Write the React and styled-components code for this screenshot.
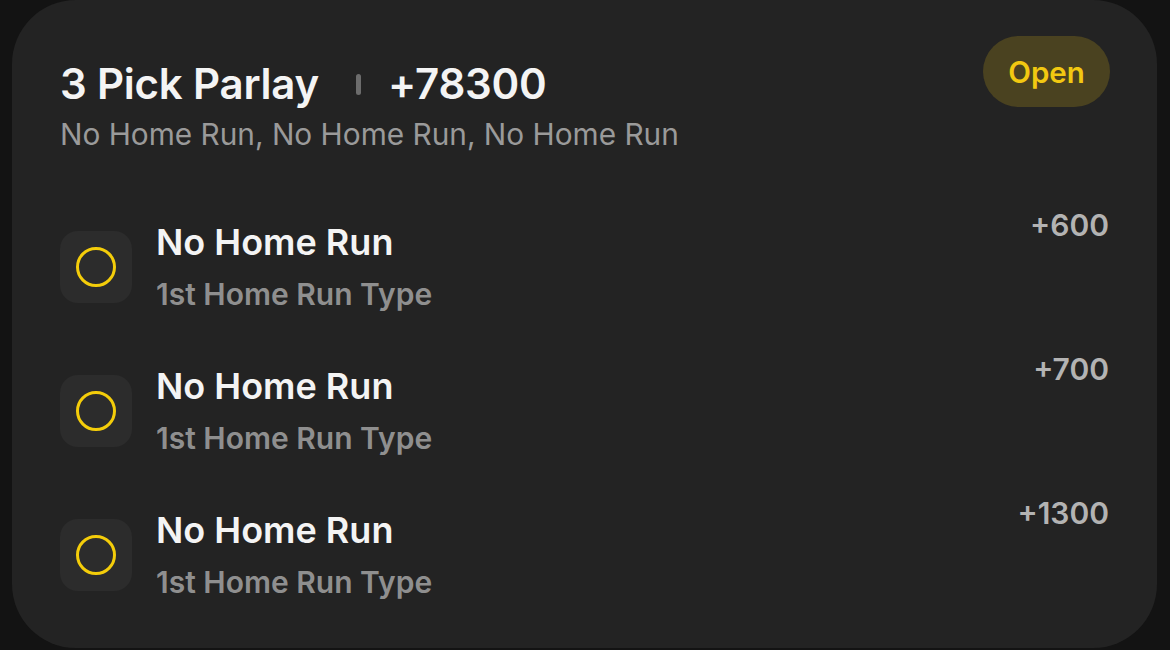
import React from "react";
import styled, { createGlobalStyle } from "styled-components";

const Global = createGlobalStyle`
  html, body { margin: 0; padding: 0; background: #131313; }
  body { font-family: Inter, "Noto Sans", "Liberation Sans", sans-serif; -webkit-font-smoothing: antialiased; }
`;

const Page = styled.div`
  width: 1170px;
  height: 650px;
  padding: 0 13px 2px 12px;
  box-sizing: border-box;
  overflow: hidden;
`;

const Card = styled.div`
  height: 648px;
  box-sizing: border-box;
  background: #232323;
  border-radius: 64px;
  padding: 36px 47px 0 48px;
  display: flex;
  flex-direction: column;
`;

const Header = styled.div`
  display: flex;
  justify-content: space-between;
  align-items: flex-start;
`;

const HeaderText = styled.div`
  display: flex;
  flex-direction: column;
  padding-top: 24px;
`;

const TitleRow = styled.div`
  display: flex;
  align-items: center;
`;

const Title = styled.span`
  font-size: 42px;
  font-weight: 600;
  color: #f4f4f4;
  line-height: 48px;
  letter-spacing: -0.2px;
`;

const Divider = styled.span`
  width: 5px;
  height: 21px;
  border-radius: 3px;
  background: #6c6c6c;
  margin: 0 27px 0 37px;
`;

const Subtitle = styled.div`
  font-size: 29.8px;
  font-weight: 400;
  color: #9a9a9a;
  line-height: 34px;
  margin-top: 9px;
`;

const Badge = styled.div`
  width: 127px;
  height: 71px;
  border-radius: 36px;
  background: #4a4220;
  color: #f2c811;
  font-size: 29.5px;
  font-weight: 600;
  display: flex;
  align-items: center;
  justify-content: center;
`;

const List = styled.div`
  display: flex;
  flex-direction: column;
  gap: 61px;
  margin-top: 80px;
`;

const Row = styled.div`
  display: flex;
  align-items: flex-start;
`;

const IconBox = styled.div`
  width: 72px;
  height: 72px;
  border-radius: 18px;
  background: #2c2c2c;
  display: flex;
  align-items: center;
  justify-content: center;
  flex-shrink: 0;
`;

const Ring = styled.div`
  width: 34px;
  height: 34px;
  border-radius: 50%;
  border: 3px solid #f4cd0a;
`;

const RowText = styled.div`
  display: flex;
  flex-direction: column;
  margin-left: 24px;
  margin-top: -12px;
  flex: 1;
`;

const RowTitle = styled.div`
  font-size: 36px;
  font-weight: 600;
  color: #f4f4f4;
  line-height: 46px;
`;

const RowSub = styled.div`
  font-size: 30px;
  font-weight: 600;
  color: #8f8f8f;
  line-height: 40px;
  margin-top: 9px;
`;

const Odds = styled.div`
  font-size: 30px;
  font-weight: 600;
  color: #b3b3b3;
  line-height: 36px;
  margin-top: -24px;
  margin-right: 1px;
`;

const picks = [
  { odds: "+600" },
  { odds: "+700" },
  { odds: "+1300" },
];

export default function App() {
  return (
    <>
      <Global />
      <Page>
        <Card>
          <Header>
            <HeaderText>
              <TitleRow>
                <Title>3 Pick Parlay</Title>
                <Divider />
                <Title>+78300</Title>
              </TitleRow>
              <Subtitle>No Home Run, No Home Run, No Home Run</Subtitle>
            </HeaderText>
            <Badge>Open</Badge>
          </Header>
          <List>
            {picks.map((p, i) => (
              <Row key={i}>
                <IconBox>
                  <Ring />
                </IconBox>
                <RowText>
                  <RowTitle>No Home Run</RowTitle>
                  <RowSub>1st Home Run Type</RowSub>
                </RowText>
                <Odds>{p.odds}</Odds>
              </Row>
            ))}
          </List>
        </Card>
      </Page>
    </>
  );
}
